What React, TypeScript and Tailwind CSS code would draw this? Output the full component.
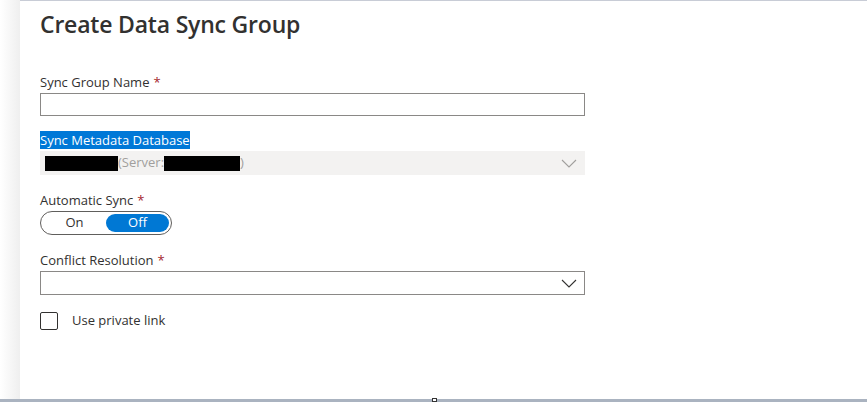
function Label({ text, required }: { text: string; required?: boolean }) {
  return (
    <div className="text-[13px] leading-[18px] text-[#323130]">
      {text}
      {required && <span className="ml-1 text-[#a4262c]">*</span>}
    </div>
  );
}

function Redacted({ w }: { w: number }) {
  return <span className="inline-block h-[15px] bg-black align-middle" style={{ width: w }} />;
}

function Chevron({ color }: { color: string }) {
  return (
    <svg width="16" height="9" viewBox="0 0 16 9" fill="none" className={color}>
      <polyline points="1,1 8,8 15,1" stroke="currentColor" strokeWidth="1.1" />
    </svg>
  );
}

export default function App() {
  return (
    <div className="flex h-[402px] w-[867px] flex-col overflow-hidden bg-white font-['Open_Sans',sans-serif]">
      <div className="flex min-h-0 flex-1">
        <div className="w-5 shrink-0 bg-gradient-to-r from-white to-[#efefef]" />
        <div className="flex-1 border-t border-[#c8ccd6] pl-5">
          <h1 className="mt-[8px] text-[23px] font-semibold leading-[30px] tracking-[-0.2px] text-[#323130]">
            Create Data Sync Group
          </h1>

          <div className="mt-[34px] w-[545px]">
            <Label text="Sync Group Name" required />
            <div className="mt-[2px] h-[23px] border border-[#8a8886] bg-white" />

            <div className="mt-[15px] leading-[16px]">
              <span className="bg-[#0078d7] text-[13px] leading-[16px] text-white">Sync Metadata Database</span>
            </div>
            <div className="mt-[3px] flex h-[24px] items-center justify-between bg-[#f3f2f1] pl-[5px] pr-[8px] text-[13px] text-[#a19f9d]">
              <div className="flex items-center">
                <Redacted w={73} />
                <span>(Server:</span>
                <Redacted w={76} />
                <span>)</span>
              </div>
              <Chevron color="text-[#a19f9d]" />
            </div>

            <div className="mt-[16px]">
              <Label text="Automatic Sync" required />
            </div>
            <div className="mt-[2px] flex h-[24px] w-[132px] items-center rounded-full border border-[#605e5c] p-[2px] text-[13px]">
              <div className="flex flex-1 justify-center text-[#323130]">On</div>
              <div className="flex h-full w-[63px] items-center justify-center rounded-full bg-[#0078d4] text-white">Off</div>
            </div>

            <div className="mt-[16px]">
              <Label text="Conflict Resolution" required />
            </div>
            <div className="mt-[2px] flex h-[24px] items-center justify-end border border-[#8a8886] pr-[7px]">
              <Chevron color="text-[#323130]" />
            </div>

            <div className="mt-[16px] flex items-center gap-[14px]">
              <div className="h-[18px] w-[18px] rounded-[2px] border border-[#323130]" />
              <span className="text-[13px] text-[#323130]">Use private link</span>
            </div>
          </div>
        </div>
      </div>
      <div className="relative h-[3px] bg-[#aab3c0]">
        <div className="absolute left-[432px] top-[-1px] h-[4px] w-[5px] border border-[#333] bg-white" />
      </div>
    </div>
  );
}
